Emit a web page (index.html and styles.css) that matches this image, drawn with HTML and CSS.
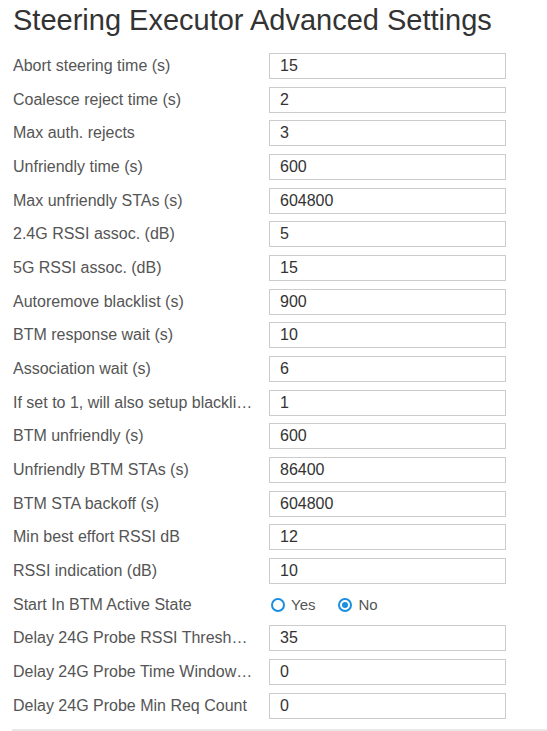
FILE: index.html
```html
<!DOCTYPE html>
<html>
<head>
<meta charset="utf-8">
<link rel="stylesheet" href="styles.css">
</head>
<body>
<div class="page">
  <h1 class="title">Steering Executor Advanced Settings</h1>
  <div class="form">
    <div class="row"><label class="lbl">Abort steering time (s)</label><input class="field" type="text" value="15"></div>
    <div class="row"><label class="lbl">Coalesce reject time (s)</label><input class="field" type="text" value="2"></div>
    <div class="row"><label class="lbl">Max auth. rejects</label><input class="field" type="text" value="3"></div>
    <div class="row"><label class="lbl">Unfriendly time (s)</label><input class="field" type="text" value="600"></div>
    <div class="row"><label class="lbl">Max unfriendly STAs (s)</label><input class="field" type="text" value="604800"></div>
    <div class="row"><label class="lbl">2.4G RSSI assoc. (dB)</label><input class="field" type="text" value="5"></div>
    <div class="row"><label class="lbl">5G RSSI assoc. (dB)</label><input class="field" type="text" value="15"></div>
    <div class="row"><label class="lbl">Autoremove blacklist (s)</label><input class="field" type="text" value="900"></div>
    <div class="row"><label class="lbl">BTM response wait (s)</label><input class="field" type="text" value="10"></div>
    <div class="row"><label class="lbl">Association wait (s)</label><input class="field" type="text" value="6"></div>
    <div class="row"><label class="lbl">If set to 1, will also setup blacklist entries</label><input class="field" type="text" value="1"></div>
    <div class="row"><label class="lbl">BTM unfriendly (s)</label><input class="field" type="text" value="600"></div>
    <div class="row"><label class="lbl">Unfriendly BTM STAs (s)</label><input class="field" type="text" value="86400"></div>
    <div class="row"><label class="lbl">BTM STA backoff (s)</label><input class="field" type="text" value="604800"></div>
    <div class="row"><label class="lbl">Min best effort RSSI dB</label><input class="field" type="text" value="12"></div>
    <div class="row"><label class="lbl">RSSI indication (dB)</label><input class="field" type="text" value="10"></div>
    <div class="row"><label class="lbl">Start In BTM Active State</label>
      <div class="radios">
        <span class="radio"><span class="dot"></span><span class="rtext">Yes</span></span>
        <span class="radio on"><span class="dot"></span><span class="rtext">No</span></span>
      </div>
    </div>
    <div class="row"><label class="lbl">Delay 24G Probe RSSI Threshold (dB)</label><input class="field" type="text" value="35"></div>
    <div class="row"><label class="lbl">Delay 24G Probe Time Window (s)</label><input class="field" type="text" value="0"></div>
    <div class="row"><label class="lbl">Delay 24G Probe Min Req Count</label><input class="field" type="text" value="0"></div>
  </div>
  <div class="rule"></div>
</div>
</body>
</html>
```

FILE: styles.css
```css
html, body {
  margin: 0;
  padding: 0;
  background: #ffffff;
}
.page {
  padding-left: 13px;
  font-family: "Liberation Sans", Arial, sans-serif;
}
.title {
  margin: 4px 0 0 0;
  font-size: 29px;
  line-height: 32px;
  font-weight: normal;
  color: #333333;
}
.form {
  margin-top: 13px;
  display: flex;
  flex-direction: column;
}
.row {
  display: flex;
  align-items: center;
  height: 33.68px;
}
.lbl {
  width: 241px;
  margin-right: 15px;
  font-size: 16px;
  color: #555555;
  white-space: nowrap;
  overflow: hidden;
  text-overflow: ellipsis;
}
.field {
  box-sizing: border-box;
  width: 237px;
  height: 26px;
  margin: 0;
  padding: 0 0 0 10px;
  border: 1px solid #cccccc;
  border-radius: 0;
  font-family: "Liberation Sans", Arial, sans-serif;
  font-size: 16px;
  color: #333333;
  background: #ffffff;
  outline: none;
}
.radios {
  display: flex;
  align-items: center;
  padding-left: 2px;
}
.radio {
  display: flex;
  align-items: center;
  margin-right: 23px;
}
.dot {
  box-sizing: border-box;
  width: 14px;
  height: 14px;
  border: 2px solid #1a8fe0;
  border-radius: 50%;
  display: flex;
  align-items: center;
  justify-content: center;
}
.radio.on .dot::after {
  content: "";
  width: 6px;
  height: 6px;
  border-radius: 50%;
  background: #1a8fe0;
}
.rtext {
  margin-left: 6px;
  font-size: 15px;
  color: #555555;
}
.rule {
  margin-top: 7px;
  margin-left: -1px;
  height: 2px;
  background: #e8e8e8;
}
```
